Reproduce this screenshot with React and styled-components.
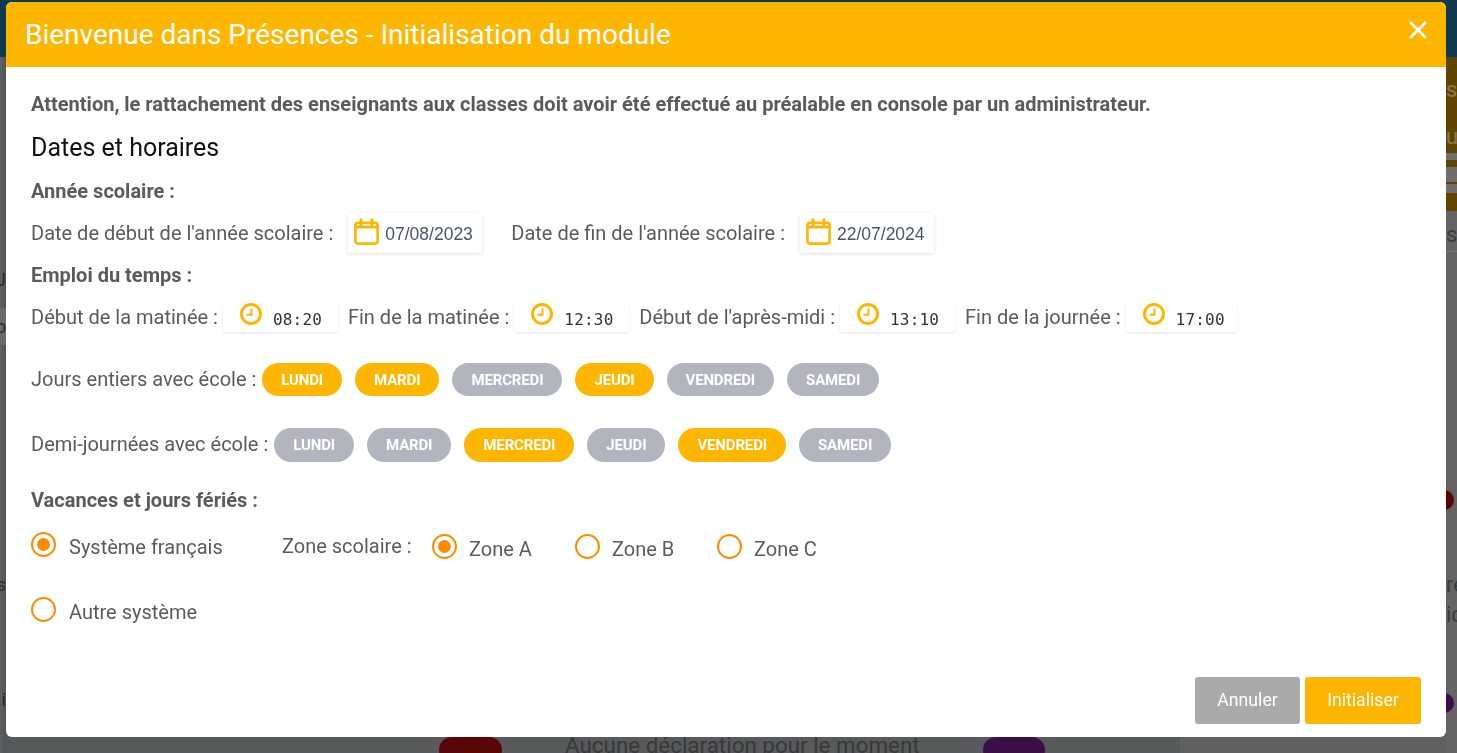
import React from "react";
import styled, { createGlobalStyle } from "styled-components";

const Global = createGlobalStyle`
  html, body { margin: 0; padding: 0; height: 100%; overflow: hidden; background: #5b5c5d; }
  * { box-sizing: border-box; }
  body { font-family: Roboto, "Liberation Sans", sans-serif; }
`;

const ORANGE = "#ffb600";
const RADIO = "#ff8c00";

/* --- dimmed page behind the dialog --- */
const Underlay = styled.div`
  width: 1457px;
  height: 753px;
  display: flex;
  flex-direction: column;
  overflow: hidden;
  background: #5b5c5d;
`;
const TopBar = styled.div`
  height: 57px;
  flex: none;
  background: #0f3a4f;
`;
const UnderBody = styled.div`
  flex: 1;
  display: flex;
  min-height: 0;
`;
const LeftEdge = styled.div`
  width: 6px;
  flex: none;
  overflow: hidden;
  color: #2c2c2c;
  font-size: 18px;
  line-height: 22px;
  white-space: nowrap;
  direction: rtl;
  background: linear-gradient(to right, #5f6061, #525354);
`;
const EdgeLine = styled.div`
  margin-top: ${(p) => p.$top}px;
`;
const EdgeBand = styled.div`
  margin-top: ${(p) => p.$top}px;
  height: 37px;
  line-height: 37px;
  background: #6a6a6a;
`;
const Middle = styled.div`
  flex: 1;
  display: flex;
  align-items: flex-end;
  min-width: 0;
`;
const BottomRow = styled.div`
  height: 16px;
  flex: none;
  width: 100%;
  display: flex;
  overflow: hidden;
  padding-left: 433px;
  background: linear-gradient(to right, #58595b 1174px, #606060 1174px);
`;
const Pill = styled.div`
  width: ${(p) => p.$w}px;
  height: 26px;
  border-radius: 13px;
  flex: none;
  background: ${(p) => p.$c};
`;
const BottomText = styled.div`
  margin-left: 63px;
  width: 418px;
  flex: none;
  font-size: 22.4px;
  line-height: 16px;
  color: #383838;
  white-space: nowrap;
`;
const RightEdge = styled.div`
  width: 11px;
  flex: none;
  overflow: hidden;
  display: flex;
  flex-direction: column;
  background: #636363;
`;
const EdgeBanner = styled.div`
  height: 154px;
  flex: none;
  display: flex;
  flex-direction: column;
  background: #5f4400;
  color: #8a7a50;
`;
const EdgeGlyph = styled.div`
  flex: none;
  font-size: 22px;
  line-height: 24px;
  margin-top: ${(p) => p.$top}px;
  color: ${(p) => p.$c || "inherit"};
  white-space: nowrap;
`;
const EdgeGrey = styled.div`
  height: 40px;
  flex: none;
  margin-top: 4px;
  background: linear-gradient(
    to bottom,
    #6e6e6e 0 7px,
    #5f4400 7px 14px,
    #6e6e6e 14px 29px,
    #5f4400 29px 31px,
    #6e6e6e 31px 40px
  );
`;
const EdgeRule = styled.div`
  height: 1px;
  flex: none;
  margin-top: 4px;
  background: #7a7a7a;
`;
const EdgeDot = styled.div`
  width: 20px;
  height: 20px;
  flex: none;
  border-radius: 50%;
  margin-top: ${(p) => p.$top}px;
  margin-left: -12px;
  background: ${(p) => p.$c};
`;

/* --- dialog --- */
const Modal = styled.div`
  position: fixed;
  left: 6px;
  top: 2px;
  width: 1440px;
  height: 735px;
  background: #fff;
  border-radius: 6px;
  overflow: hidden;
  display: flex;
  flex-direction: column;
`;
const Header = styled.header`
  height: 65px;
  flex: none;
  background: ${ORANGE};
  display: flex;
  align-items: center;
  justify-content: space-between;
  padding: 0 18px 0 19px;
`;
const Title = styled.h1`
  margin: 0;
  font-size: 28px;
  font-weight: 400;
  color: #fff;
`;
const Close = styled.button`
  border: 0;
  background: none;
  padding: 0;
  margin-top: -10px;
  display: flex;
  cursor: pointer;
`;
const Content = styled.div`
  flex: 1;
  padding: 24px 25px 0;
  display: flex;
  flex-direction: column;
  color: #5b5b5f;
  font-size: 20px;
`;
const Warning = styled.p`
  margin: 0;
  font-weight: 700;
  font-size: 20px;
  line-height: 26px;
`;
const Section = styled.h2`
  margin: 16px 0 0;
  font-size: 25px;
  font-weight: 400;
  line-height: 30px;
  color: #111;
`;
const Sub = styled.h3`
  margin: ${(p) => p.$mt}px 0 0;
  font-size: 20px;
  font-weight: 700;
  line-height: 22px;
`;
const Row = styled.div`
  display: flex;
  align-items: center;
  margin-top: ${(p) => p.$mt}px;
`;
const Label = styled.span`
  margin-left: ${(p) => p.$ml || 0}px;
  white-space: nowrap;
`;
const ChipLabel = styled(Label)`
  margin-top: -2px;
`;
const DateField = styled.div`
  margin-left: 15px;
  height: 40px;
  width: 134px;
  flex: none;
  display: flex;
  align-items: center;
  gap: 6px;
  padding: 0 6px;
  background: #fff;
  border-radius: 3px;
  box-shadow: 0 1px 4px rgba(0, 0, 0, 0.12);
`;
const DateText = styled.span`
  margin-top: 2px;
  font-family: "Liberation Sans", sans-serif;
  font-size: 17.5px;
  color: #4a5568;
`;
const CalendarIcon = styled.svg`
  flex: none;
  margin-top: -3px;
`;
const TimeField = styled.div`
  margin: 0 10px 0 5px;
  height: 31px;
  width: ${(p) => p.$w}px;
  flex: none;
  position: relative;
  display: flex;
  align-items: center;
  padding: 5px 0 0 50px;
  background: #fff;
  border-radius: 3px;
  box-shadow: 0 1px 3px rgba(0, 0, 0, 0.1);
  font-family: "DejaVu Sans Mono", monospace;
  font-size: 16px;
  letter-spacing: 0.2px;
  color: #333;
`;
const ClockSlot = styled.span`
  position: absolute;
  left: 17px;
  top: 2px;
  display: flex;
`;
const Chips = styled.div`
  display: flex;
  gap: 13px;
  margin-left: 6px;
`;
const Chip = styled.span`
  height: ${(p) => p.$h}px;
  padding: 0 19px;
  border-radius: 17px;
  display: flex;
  align-items: center;
  background: ${(p) => (p.$on ? ORANGE : "#b2b5bd")};
  color: #fff;
  font-size: 15px;
  font-weight: 700;
  letter-spacing: -0.15px;
  text-transform: uppercase;
`;
const RadioItem = styled.label`
  display: flex;
  align-items: center;
  width: ${(p) => p.$w}px;
  flex: none;
`;
const ZoneItem = styled(RadioItem)`
  margin: 2px 0 -2px;
`;
const RadioMark = styled.span`
  width: 25px;
  height: 25px;
  flex: none;
  border-radius: 50%;
  border: 2px solid ${RADIO};
  display: flex;
  align-items: center;
  justify-content: center;
  margin: -5px ${(p) => p.$gap || 12}px 0 0;
  &::after {
    content: "";
    width: 13px;
    height: 13px;
    border-radius: 50%;
    background: ${(p) => (p.$on ? RADIO : "transparent")};
  }
`;
const ZoneLabel = styled.span`
  width: 150px;
  flex: none;
  margin-top: -2px;
`;
const Footer = styled.footer`
  display: flex;
  justify-content: flex-end;
  gap: 5px;
  padding: 0 25px 13px 0;
`;
const Btn = styled.button`
  height: 47px;
  width: ${(p) => p.$w}px;
  border: 0;
  border-radius: 3px;
  padding: 0 0 2px;
  background: ${(p) => (p.$primary ? ORANGE : "#aaaaaa")};
  color: #fff;
  font-family: inherit;
  font-size: 17.7px;
`;

const Calendar = () => (
  <CalendarIcon width="25" height="27" viewBox="0 0 25 27" fill="none" stroke={ORANGE} strokeWidth="2.6">
    <rect x="1.4" y="4.8" width="22.2" height="20.8" rx="2.5" />
    <path d="M1.4 9h22.2" strokeWidth="3" />
    <path d="M7 1.6v5.5M18 1.6v5.5" strokeLinecap="round" strokeWidth="2.8" />
  </CalendarIcon>
);
const Clock = () => (
  <svg width="22" height="22" viewBox="0 0 22 22" fill="none" stroke={ORANGE}>
    <circle cx="11" cy="11" r="9.5" strokeWidth="3" />
    <path d="M11.5 5.5v6.2H6.5" strokeWidth="2" />
  </svg>
);
const CloseIcon = () => (
  <svg width="20" height="20" viewBox="0 0 20 20" stroke="#fff" strokeWidth="2.6">
    <path d="M2 2l16 16M18 2L2 18" />
  </svg>
);

const DAYS = ["Lundi", "Mardi", "Mercredi", "Jeudi", "Vendredi", "Samedi"];

const DayChips = ({ on, h }) => (
  <Chips>
    {DAYS.map((d) => (
      <Chip key={d} $on={on.includes(d)} $h={h}>
        {d}
      </Chip>
    ))}
  </Chips>
);

const Time = ({ label, value, w = 115 }) => (
  <>
    <Label>{label}</Label>
    <TimeField $w={w}>
      <ClockSlot>
        <Clock />
      </ClockSlot>
      {value}
    </TimeField>
  </>
);

export default function App() {
  return (
    <>
      <Global />
      <Underlay>
        <TopBar />
        <UnderBody>
          <LeftEdge>
            <EdgeLine $top={212}>J</EdgeLine>
            <EdgeBand $top={17}>b</EdgeBand>
            <EdgeLine $top={229}>s</EdgeLine>
            <EdgeLine $top={93}>i</EdgeLine>
          </LeftEdge>
          <Middle>
            <BottomRow>
              <Pill $w={63} $c="#570505" />
              <BottomText>Aucune déclaration pour le moment</BottomText>
              <Pill $w={62} $c="#3a0f47" />
            </BottomRow>
          </Middle>
          <RightEdge>
            <EdgeBanner>
              <EdgeGlyph $top={21}>se</EdgeGlyph>
              <EdgeGlyph $top={23}>u</EdgeGlyph>
              <EdgeGrey />
            </EdgeBanner>
            <EdgeGlyph $top={12} $c="#3c3c3c">ss</EdgeGlyph>
            <EdgeRule />
            <EdgeDot $top={238} $c="#570505" />
            <EdgeGlyph $top={63} $c="#3c3c3c">re</EdgeGlyph>
            <EdgeGlyph $top={6} $c="#3c3c3c">ic</EdgeGlyph>
            <EdgeDot $top={66} $c="#3a0f47" />
          </RightEdge>
        </UnderBody>
      </Underlay>

      <Modal>
        <Header>
          <Title>Bienvenue dans Présences - Initialisation du module</Title>
          <Close aria-label="Fermer">
            <CloseIcon />
          </Close>
        </Header>
        <Content>
          <Warning>
            Attention, le rattachement des enseignants aux classes doit avoir été effectué au préalable en console par un administrateur.
          </Warning>
          <Section>Dates et horaires</Section>
          <Sub $mt={17}>Année scolaire :</Sub>
          <Row $mt={11}>
            <Label>Date de début de l'année scolaire :</Label>
            <DateField>
              <Calendar />
              <DateText>07/08/2023</DateText>
            </DateField>
            <Label $ml={29}>Date de fin de l'année scolaire :</Label>
            <DateField>
              <Calendar />
              <DateText>22/07/2024</DateText>
            </DateField>
          </Row>
          <Sub $mt={11}>Emploi du temps :</Sub>
          <Row $mt={15}>
            <Time label="Début de la matinée :" value="08:20" />
            <Time label="Fin de la matinée :" value="12:30" />
            <Time label="Début de l'après-midi :" value="13:10" />
            <Time label="Fin de la journée :" value="17:00" w={111} />
          </Row>
          <Row $mt={31}>
            <ChipLabel>Jours entiers avec école :</ChipLabel>
            <DayChips on={["Lundi", "Mardi", "Jeudi"]} h={33} />
          </Row>
          <Row $mt={32}>
            <ChipLabel>Demi-journées avec école :</ChipLabel>
            <DayChips on={["Mercredi", "Vendredi"]} h={34} />
          </Row>
          <Sub $mt={27}>Vacances et jours fériés :</Sub>
          <Row $mt={24}>
            <RadioItem $w={251}>
              <RadioMark $on $gap={13} />
              Système français
            </RadioItem>
            <ZoneLabel>Zone scolaire :</ZoneLabel>
            <ZoneItem $w={143}>
              <RadioMark $on />
              Zone A
            </ZoneItem>
            <ZoneItem $w={142}>
              <RadioMark />
              Zone B
            </ZoneItem>
            <ZoneItem $w={142}>
              <RadioMark />
              Zone C
            </ZoneItem>
          </Row>
          <Row $mt={41}>
            <RadioItem $w={251}>
              <RadioMark $gap={13} />
              Autre système
            </RadioItem>
          </Row>
        </Content>
        <Footer>
          <Btn $w={105}>Annuler</Btn>
          <Btn $w={116} $primary>Initialiser</Btn>
        </Footer>
      </Modal>
    </>
  );
}
